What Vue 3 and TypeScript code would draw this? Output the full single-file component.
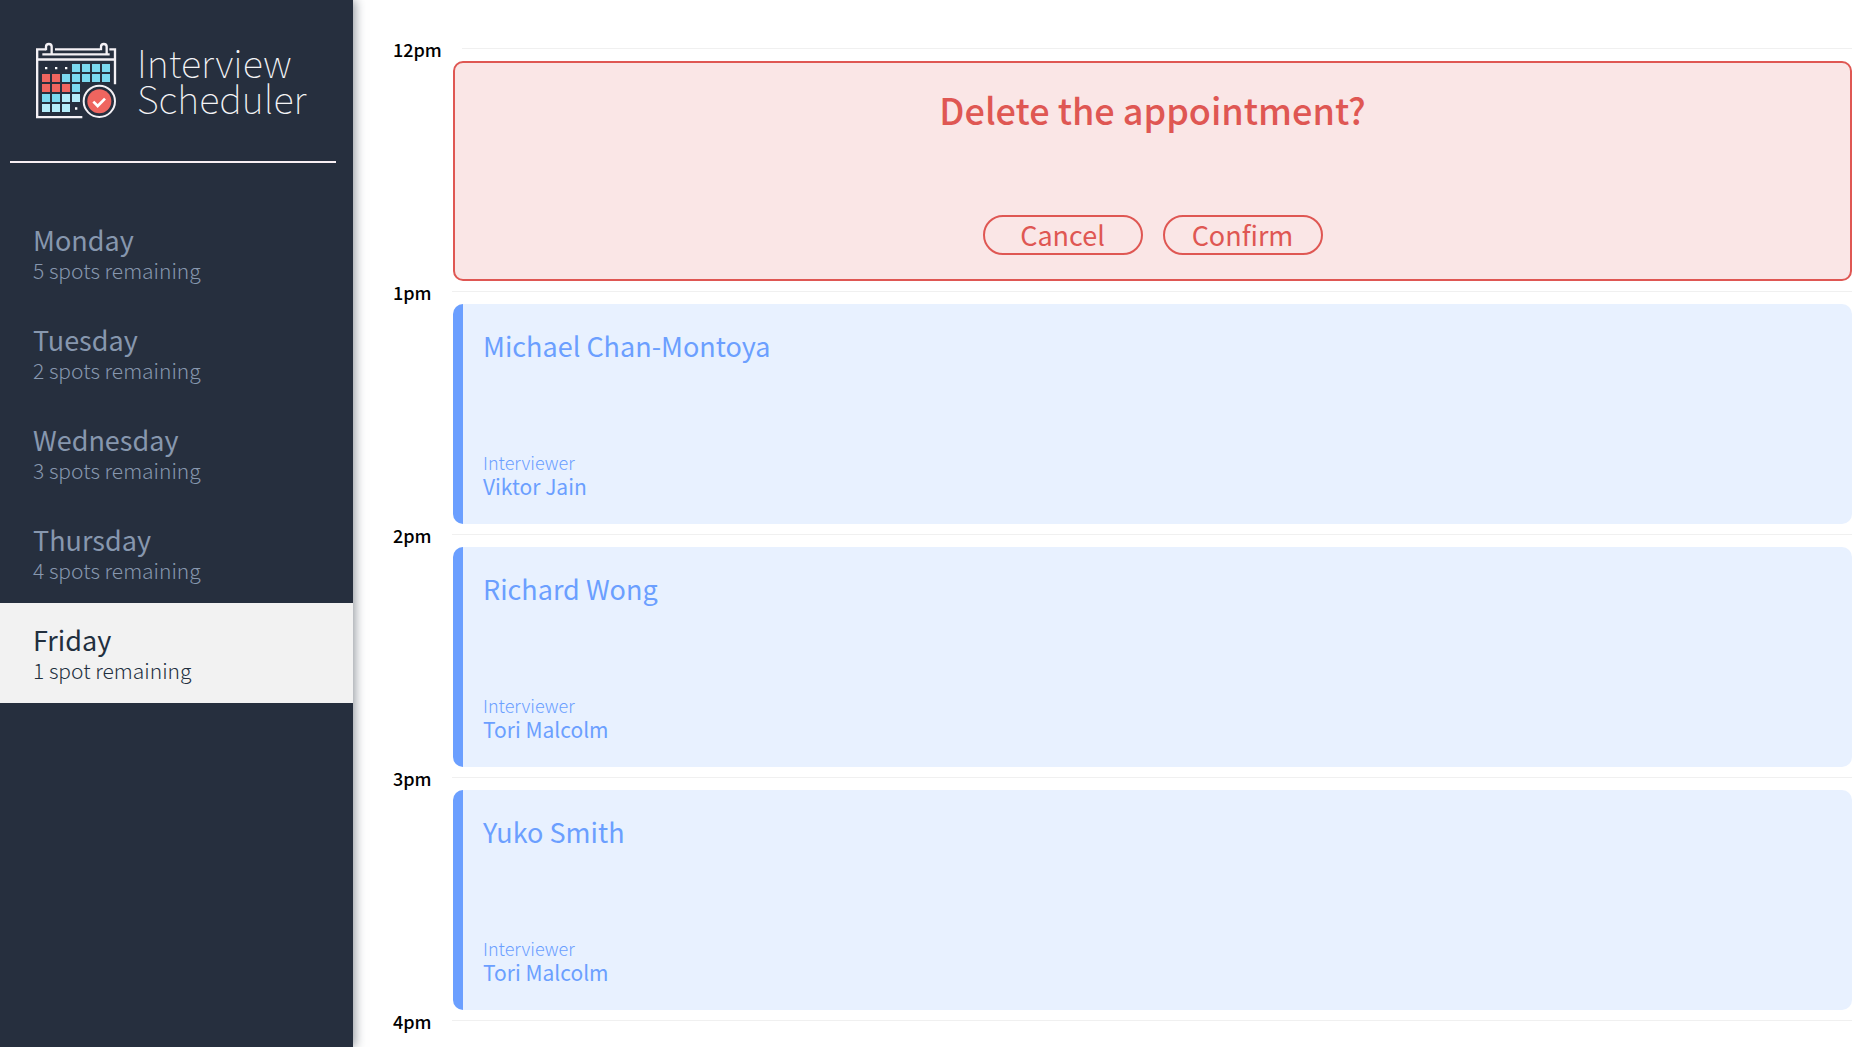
<script setup lang="ts">
import { ref } from 'vue'

interface Day {
  name: string
  spots: number
}

interface Slot {
  time: string
  student?: string
  interviewer?: string
  confirming?: boolean
}

interface Cell {
  x: number
  y: number
  fill: string
}

const days: Day[] = [
  { name: 'Monday', spots: 5 },
  { name: 'Tuesday', spots: 2 },
  { name: 'Wednesday', spots: 3 },
  { name: 'Thursday', spots: 4 },
  { name: 'Friday', spots: 1 },
]

const slots: Slot[] = [
  { time: '12pm', confirming: true },
  { time: '1pm', student: 'Michael Chan-Montoya', interviewer: 'Viktor Jain' },
  { time: '2pm', student: 'Richard Wong', interviewer: 'Tori Malcolm' },
  { time: '3pm', student: 'Yuko Smith', interviewer: 'Tori Malcolm' },
  { time: '4pm' },
]

const selected = ref('Friday')

const spotsText = (n: number): string => `${n} ${n === 1 ? 'spot' : 'spots'} remaining`

const palette: Record<string, string> = { r: '#ef655f', b: '#7bd9f0', l: '#b5edfa' }
const cells: Cell[] = ['...bbbb', 'rrbbbbb', 'rrrb', 'bbll', 'lll.'].flatMap((row, y) =>
  [...row].flatMap((c, x) => (c === '.' ? [] : [{ x: 66 + x * 30, y: 102 + y * 30, fill: palette[c] }])),
)
</script>

<template>
  <div class="layout">
    <aside class="sidebar">
      <div class="brand">
        <svg class="brand-icon" viewBox="45 36 246 234" aria-hidden="true">
          <g fill="none" stroke="#f4f1f5" stroke-width="7">
            <path d="M78 58H51.500V261.500H187M105 58H240M268 58H285V163M51 88.500H285M67 73H269" />
            <path d="M78 61V50a8.500 8 0 0 1 17 0V73M243 61V50a8.500 8 0 0 1 17 0V73" />
          </g>
          <rect v-for="c in cells" :key="`${c.x}-${c.y}`" :x="c.x" :y="c.y" width="24" height="24" :fill="c.fill" />
          <path d="M75 111h7v7h-7zM105 111h7v7h-7zM135 111h7v7h-7zM165 232h7v7h-7z" fill="#fff" />
          <circle cx="238" cy="214" r="47" fill="#262f3e" stroke="#f4f1f5" stroke-width="6" />
          <circle cx="238" cy="214" r="36" fill="#ef655f" />
          <path d="M220 215l13 13 22-22" fill="none" stroke="#fff" stroke-width="8" />
        </svg>
        <div class="brand-name">Interview<br />Scheduler</div>
      </div>
      <hr class="divider" />
      <nav>
        <ul class="days">
          <li v-for="day in days" :key="day.name">
            <a href="#" class="day" :class="{ selected: day.name === selected }" @click.prevent="selected = day.name">
              <span class="day-name">{{ day.name }}</span>
              <span class="day-spots">{{ spotsText(day.spots) }}</span>
            </a>
          </li>
        </ul>
      </nav>
    </aside>

    <main class="schedule">
      <section v-for="slot in slots" :key="slot.time">
        <header class="hour">
          <h4 class="hour-label">{{ slot.time }}</h4>
          <hr class="hour-line" />
        </header>
        <div v-if="slot.confirming" class="card confirm">
          <h1 class="confirm-title">Delete the appointment?</h1>
          <div class="actions">
            <button type="button" class="button">Cancel</button>
            <button type="button" class="button">Confirm</button>
          </div>
        </div>
        <div v-else-if="slot.student" class="card show">
          <h2 class="student">{{ slot.student }}</h2>
          <div>
            <h4 class="caption">Interviewer</h4>
            <h3 class="interviewer">{{ slot.interviewer }}</h3>
          </div>
        </div>
      </section>
    </main>
  </div>
</template>

<style>
body {
  margin: 0;
  background: #fff;
}
</style>

<style scoped>
.layout {
  display: flex;
  min-height: 100vh;
  font-family: 'Noto Sans CJK JP', 'Noto Sans', sans-serif;
  font-weight: 400;
  color: #000;
}

h1,
h2,
h3,
h4,
ul {
  margin: 0;
  padding: 0;
  font-weight: inherit;
}

.sidebar {
  flex: 0 0 353px;
  background: #262f3e;
  box-shadow: 2px 0 10px rgba(38, 47, 62, 0.5);
}

.brand {
  display: flex;
  gap: 20px;
  padding: 42px 35px 0;
}

.brand-icon {
  flex: none;
  width: 82px;
  height: 78px;
}

.brand-name {
  padding-top: 2px;
  font-size: 38px;
  font-weight: 100;
  line-height: 36px;
  color: #f4f4f6;
}

.divider {
  height: 2px;
  margin: 41px 17px 40px 10px;
  border: 0;
  background: #f8eff3;
}

.days {
  list-style: none;
}

.day {
  display: flex;
  flex-direction: column;
  padding: 20px 33px;
  color: #8797ae;
  text-decoration: none;
}

.day.selected {
  background: #f2f2f2;
  color: #222f3e;
}

.day-name {
  font-size: 27px;
  line-height: 34px;
}

.day-spots {
  font-size: 21px;
  font-weight: 200;
  line-height: 26px;
}

.schedule {
  flex: 1;
  min-width: 0;
  padding: 38px 23px 0 40px;
}

.hour {
  display: flex;
  gap: 20px;
  height: 23px;
}

.hour-label {
  font-size: 18px;
  font-weight: 500;
  line-height: 22px;
}

.hour-line {
  flex: 1;
  height: 1px;
  margin: 10px 0 0;
  border: 0;
  background: #f0f0f0;
}

.card {
  display: flex;
  flex-direction: column;
  justify-content: space-between;
  box-sizing: border-box;
  min-height: 220px;
  margin-left: 60px;
  border-radius: 10px;
}

.confirm {
  align-items: center;
  padding: 20px 20px 24px;
  border: 2px solid #df5753;
  background: #fae6e6;
  color: #df5753;
}

.confirm-title {
  font-size: 36px;
  font-weight: 500;
  line-height: 52px;
}

.actions {
  display: flex;
  gap: 20px;
}

.button {
  width: 160px;
  height: 40px;
  padding: 0;
  border: 2px solid #df5753;
  border-radius: 20px;
  background: transparent;
  color: inherit;
  font-family: inherit;
  font-size: 27px;
  font-weight: inherit;
  line-height: 36px;
}

.show {
  padding: 24px 20px 26px;
  border-left: 10px solid #6b9fff;
  background: #e8f1ff;
  color: #6b9fff;
}

.student {
  font-size: 27px;
  line-height: 36px;
}

.caption {
  font-size: 18px;
  font-weight: 200;
  line-height: 24px;
}

.interviewer {
  font-size: 21px;
  line-height: 24px;
}
</style>
